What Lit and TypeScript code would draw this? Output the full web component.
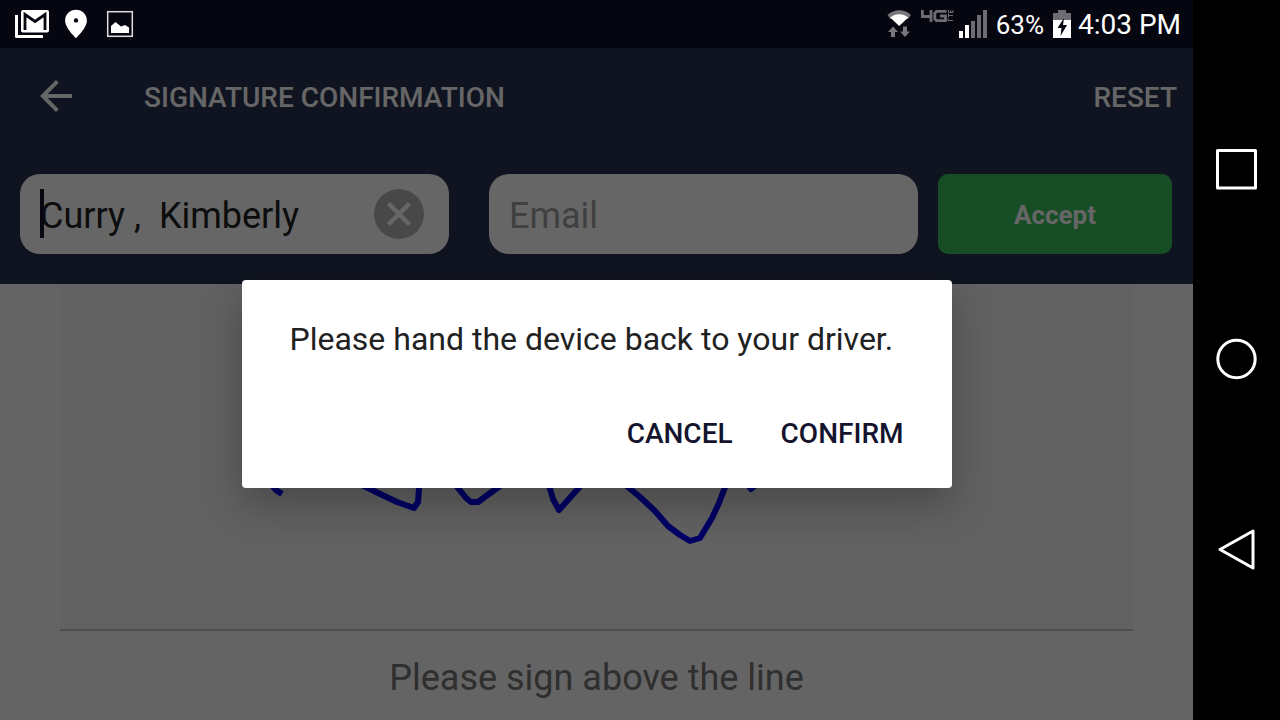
import { LitElement, html, css } from "lit";
import { customElement } from "lit/decorators.js";

@customElement("status-bar")
class StatusBar extends LitElement {
  static styles = css`
    :host {
      display: flex;
      align-items: center;
      justify-content: space-between;
      height: 48px;
      padding: 0 12px;
      background: #060610;
      color: #fff;
    }
    svg { display: block; }
    .group { display: flex; align-items: center; }
    .left { gap: 12px; }
    .battery { font-size: 26px; line-height: 32px; margin: 2px 8px 0; }
    .time { font-size: 28px; line-height: 32px; margin: 2px 0 0 6px; }
  `;
  render() {
    return html`
      <div class="group left">
        <svg width="40" height="48" viewBox="12 0 40 48" aria-label="Mail">
          <path d="M16.500 15V36.500H43" fill="none" stroke="#fff" stroke-width="3" stroke-linejoin="round" />
          <rect x="21" y="10" width="28" height="22.500" rx="2" fill="#fff" />
          <path d="M25 30V14.500L35 21.500l10-7V30" fill="none" stroke="#060610" stroke-width="2.800" />
        </svg>
        <svg width="24" height="48" viewBox="64 0 24 48" aria-label="Location">
          <path fill="#fff" fill-rule="evenodd" d="M76 9.700c-6 0-10.900 4.700-10.900 10.700C65.100 28 76 38 76 38s10.900-10 10.900-17.600c0-6-4.900-10.700-10.900-10.700zm0 8.500a2.200 2.200 0 1 1 0 4.400 2.200 2.200 0 0 1 0-4.400z" />
        </svg>
        <svg width="36" height="48" viewBox="100 0 36 48" aria-label="Image">
          <rect x="107.700" y="11.700" width="24.600" height="24.600" fill="none" stroke="#ddd" stroke-width="1.500" />
          <path fill="#fff" d="M111 33v-7l4.500-4 5.500 4.500 4-1.500 4 2.500v5.500z" />
        </svg>
      </div>
      <div class="group">
        <svg width="102" height="48" viewBox="885 0 102 48" aria-label="Network">
          <path fill="#77777c" d="M886.500 15c6-6.500 17.500-6.500 23.500 0l-3 4h-17.500z" />
          <path fill="#fff" d="M889.200 17.500c5-4.500 13-4.500 18 0l-9 8.500z" />
          <path fill="#77777c" d="m892 26.500 5 5.500h-3v5h-4v-5h-3zM902 26.500h4v5h3l-5 5.500-5-5.500h3z" />
          <path fill="none" stroke="#6c6c72" stroke-width="2.800" d="M921.400 10v6.500H930.500M930 10v12M945.500 11.400H935.500L933.800 13.200V19L935.500 20.600H944.500V16H939" />
          <path fill="none" stroke="#6c6c72" stroke-width="1" d="M947 18.500v2h5M947 15.500h5M947.500 13.500v4M947.500 10v2.500h4.500v-2.500M949.700 10v2.500" />
          <path fill="#fff" d="M958 31h4v7h-4zM964 25h4v13h-4z" />
          <path fill="#6c6c72" d="M970 21h4v17h-4zM976 15h4v23h-4zM982 10h4v28h-4z" />
        </svg>
        <span class="battery">63%</span>
        <svg width="20" height="48" viewBox="1051 0 20 48" aria-label="Charging">
          <path fill="#6c6c72" d="M1052 13h5v-3h8v3h5v7h-18z" />
          <path fill="#fff" d="M1052 20h18v18h-18z" />
          <path fill="#060610" d="M1063 18l-6.500 10h4l-1 8 6.500-11h-4z" />
        </svg>
        <span class="time">4:03 PM</span>
      </div>
    `;
  }
}

@customElement("nav-keys")
class NavKeys extends LitElement {
  static styles = css`
    :host {
      display: flex;
      flex-direction: column;
      justify-content: space-between;
      align-items: center;
      padding: 144px 0 146px;
      background: #000;
    }
    button { border: 0; padding: 0; background: none; }
    svg { display: block; }
    path, rect, circle { fill: none; stroke: #fff; stroke-width: 3; stroke-linejoin: round; }
  `;
  render() {
    return html`
      <button aria-label="Recent apps">
        <svg width="50" height="50" viewBox="0 0 50 50"><rect x="5.500" y="6.500" width="38" height="37.500" /></svg>
      </button>
      <button aria-label="Home">
        <svg width="50" height="50" viewBox="0 0 50 50"><circle cx="24.500" cy="25" r="18.700" /></svg>
      </button>
      <button aria-label="Back">
        <svg width="50" height="50" viewBox="0 0 50 50"><path d="M41 7v37L8 25.500z" /></svg>
      </button>
    `;
  }
}

@customElement("confirm-dialog")
class ConfirmDialog extends LitElement {
  static styles = css`
    :host {
      position: absolute;
      inset: 0;
      display: flex;
      align-items: center;
      justify-content: center;
      background: rgba(0, 0, 0, 0.6);
    }
    .dialog {
      box-sizing: border-box;
      width: 710px;
      max-width: 90%;
      padding: 40px 48px 34px;
      border-radius: 4px;
      background: #fff;
      box-shadow: 0 16px 44px rgba(0, 0, 0, 0.28);
    }
    .message { margin: 0; font-size: 32px; line-height: 38px; color: #212121; }
    .actions { display: flex; justify-content: flex-end; gap: 48px; padding-top: 56px; }
    button {
      border: 0;
      padding: 0;
      background: none;
      font: 500 28px/40px Roboto, sans-serif;
      color: #14142e;
    }
  `;
  render() {
    return html`
      <div class="dialog" role="alertdialog" aria-modal="true" aria-labelledby="message">
        <p class="message" id="message">Please hand the device back to your driver.</p>
        <div class="actions">
          <button>CANCEL</button>
          <button>CONFIRM</button>
        </div>
      </div>
    `;
  }
}

@customElement("app-root")
class AppRoot extends LitElement {
  static styles = css`
    :host {
      display: grid;
      grid-template-columns: minmax(0, 1fr) 87px;
      min-height: 100vh;
      font-family: Roboto, sans-serif;
    }
    .phone { display: flex; flex-direction: column; }
    .screen {
      position: relative;
      flex: 1;
      display: flex;
      flex-direction: column;
      background: #fafafa;
    }
    .header { background: #283250; color: #fff; }
    .bar { display: flex; align-items: center; height: 96px; padding: 0 16px 0 32px; }
    .bar button {
      border: 0;
      padding: 0;
      background: none;
      color: inherit;
      font: 500 28px/34px Roboto, sans-serif;
    }
    .title { flex: 1; margin: 4px 0 0 64px; font-size: 28px; line-height: 34px; font-weight: 500; }
    .bar .reset { margin-top: 4px; }
    svg { display: block; }
    .form {
      display: grid;
      grid-template-columns: minmax(0, 1fr) 234px;
      gap: 20px;
      padding: 30px 21px 30px 20px;
    }
    .fields { display: grid; grid-template-columns: 1fr 1fr; gap: 40px; }
    .field { position: relative; display: flex; }
    input {
      box-sizing: border-box;
      width: 100%;
      height: 80px;
      border: 0;
      border-radius: 20px;
      padding: 4px 20px 0;
      background: #fff;
      color: #212121;
      font: 36px Roboto, sans-serif;
      outline: 0;
    }
    input::placeholder { color: #a0a0a0; opacity: 1; }
    .name input { padding-right: 80px; }
    .caret { position: absolute; left: 20px; top: 15px; width: 4px; height: 49px; background: #14142e; }
    .clear { position: absolute; right: 25px; top: 15px; border: 0; padding: 0; background: none; }
    .accept {
      border: 0;
      border-radius: 10px;
      padding: 2px 0 0;
      background: #37c05c;
      color: #fff;
      font: 700 26px Roboto, sans-serif;
    }
    .pad { flex: 1; margin: 0 60px; background: #f6f6f6; border-bottom: 2px solid #c4c4c4; }
    .pad svg { width: 100%; }
    .ink { fill: none; stroke: #0000ff; stroke-width: 6; stroke-linejoin: round; }
    .hint { margin: 0; padding: 26px 0 21px; text-align: center; font-size: 36px; line-height: 42px; color: #757575; }
  `;
  render() {
    return html`
      <div class="phone">
        <status-bar></status-bar>
        <main class="screen">
          <header class="header">
            <div class="bar">
              <button aria-label="Back">
                <svg width="48" height="48" viewBox="0 0 24 24">
                  <path fill="#fff" d="M20 11H7.830l5.590-5.590L12 4l-8 8 8 8 1.410-1.410L7.830 13H20v-2z" />
                </svg>
              </button>
              <h1 class="title">SIGNATURE CONFIRMATION</h1>
              <button class="reset">RESET</button>
            </div>
            <div class="form">
              <div class="fields">
                <div class="field name">
                  <input type="text" aria-label="Name" .value=${"Curry ,  Kimberly"} />
                  <span class="caret"></span>
                  <button class="clear" aria-label="Clear name">
                    <svg width="50" height="50" viewBox="0 0 50 50">
                      <circle cx="25" cy="25" r="25" fill="#b4b4b4" />
                      <path d="M14.500 14.500l21 21m0-21l-21 21" stroke="#fff" stroke-width="4.500" />
                    </svg>
                  </button>
                </div>
                <div class="field">
                  <input type="email" aria-label="Email" placeholder="Email" />
                </div>
              </div>
              <button class="accept">Accept</button>
            </div>
          </header>
          <section class="pad" aria-label="Signature">
            <svg viewBox="60 284 1073 345">
              <path class="ink" d="M271 484L276 490L282 494" />
              <path class="ink" d="M356 482L376 492L397 502L414 508L418 502L419.500 482" />
              <path class="ink" d="M454 483L466 498L471 502L478 502L504 483" />
              <path class="ink" d="M548 482L553 499L559 510L584 482" />
              <path class="ink" d="M622 482L640 497L655 511L668 526L680 535L690 541L700 538L712 518L719 503L727 482" />
              <path class="ink" d="M746 482L751 489L757 484" />
            </svg>
          </section>
          <p class="hint">Please sign above the line</p>
          <confirm-dialog></confirm-dialog>
        </main>
      </div>
      <nav-keys></nav-keys>
    `;
  }
}
